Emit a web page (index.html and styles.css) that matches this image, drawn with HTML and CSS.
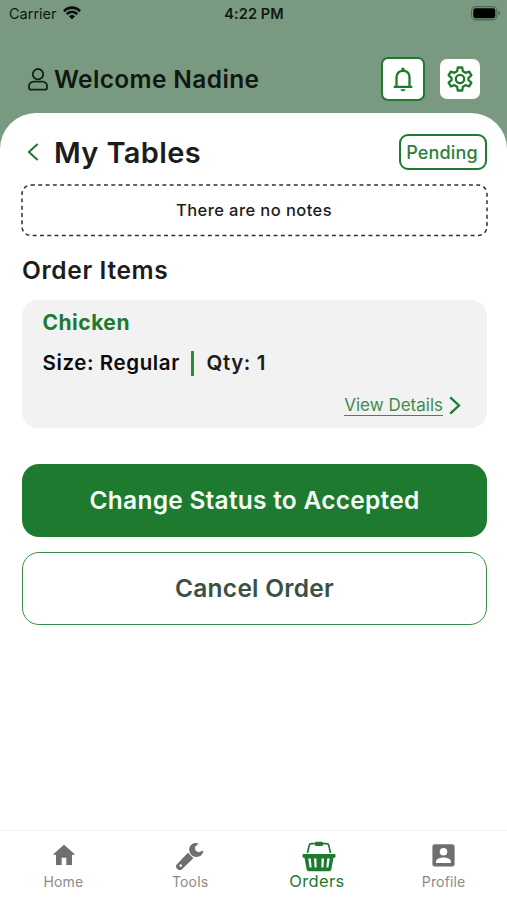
FILE: index.html
```html
<!DOCTYPE html>
<html lang="en">
<head>
<meta charset="utf-8">
<meta name="viewport" content="width=device-width, initial-scale=1">
<title>My Tables</title>
<link rel="stylesheet" href="styles.css">
</head>
<body>
<div class="app">
  <div class="status-bar">
    <div class="carrier">
      <span class="carrier-name">Carrier</span>
      <svg class="wifi" width="18" height="14" viewBox="0 0 18 14">
        <path d="M0 4.300C5-1.100 13-1.100 18 4.300L16.200 6.200C12.200 2 5.800 2 1.800 6.200Z"/>
        <path d="M2.900 7.300C6.300 3.700 11.700 3.700 15.100 7.300L13.300 9.200C10.900 6.700 7.100 6.700 4.700 9.200Z"/>
        <path d="M5.900 10.300C7.600 8.600 10.400 8.600 12.100 10.300L9 13.600Z"/>
      </svg>
    </div>
    <span class="clock">4:22 PM</span>
    <svg class="battery" width="30" height="15" viewBox="0 0 30 15">
      <rect x=".6" y=".6" width="25.300" height="13.300" rx="4" fill="none" stroke="#4b6650" stroke-width="1.100"/>
      <rect x="2.300" y="2.300" width="22" height="9.900" rx="2.300"/>
      <path d="M27.300 5v4.500q1.800-.6 1.800-2.250T27.300 5Z" fill="#4b6650"/>
    </svg>
  </div>

  <header class="welcome">
    <svg class="user" width="20" height="23" viewBox="0 0 20 23">
      <circle cx="10" cy="6.200" r="5.200"/>
      <path d="M5.600 13.600h8.800a4.600 4.600 0 0 1 4.600 4.600v1.600a1.800 1.800 0 0 1-1.800 1.800H2.800A1.800 1.800 0 0 1 1 19.800v-1.600a4.600 4.600 0 0 1 4.600-4.600Z"/>
    </svg>
    <h1 class="greeting">Welcome Nadine</h1>
    <button class="icon-button bell-button" aria-label="Notifications">
      <svg width="20" height="25" viewBox="0 0 20 25">
        <path class="line" d="M3.500 19.600V10.500C3.500 6.300 6 3.800 10 3.800s6.500 2.500 6.500 6.700v9.100M.7 19.800h18.600"/>
        <path class="fill" d="M8.300 4V2.200a1.700 1.700 0 0 1 3.400 0V4ZM7.500 22.300h5a2.500 2 0 0 1-5 0Z"/>
      </svg>
    </button>
    <button class="icon-button gear-button" aria-label="Settings">
      <svg width="26" height="26" viewBox="0 0 26 26">
        <path class="line" d="M10.800 1.500h4.400l.7 3.700 2.700 1.600 3.600-1.200 2.200 3.800-2.900 2.500v2.200l2.900 2.500-2.200 3.800-3.600-1.200-2.700 1.600-.7 3.700h-4.400l-.7-3.700-2.700-1.600-3.600 1.200-2.200-3.800 2.900-2.500v-2.200L1.600 9.400l2.200-3.800 3.600 1.200 2.700-1.600Z"/>
        <circle class="line" cx="13" cy="13" r="4.200"/>
      </svg>
    </button>
  </header>

  <main class="sheet">
    <div class="title-row">
      <svg class="back" width="12" height="18" viewBox="0 0 12 18"><path d="M10.600 1 2 9l8.600 8"/></svg>
      <h2 class="title">My Tables</h2>
      <span class="badge">Pending</span>
    </div>

    <div class="notes">
      <svg class="notes-outline" width="467" height="53" viewBox="0 0 467 53">
        <rect x="1" y="1" width="465" height="50.500" rx="9"/>
      </svg>
      <span class="notes-text">There are no notes</span>
    </div>

    <h3 class="section-title">Order Items</h3>

    <section class="item">
      <div class="item-name">Chicken</div>
      <div class="item-meta">
        <span class="size">Size: Regular</span>
        <span class="divider"></span>
        <span class="qty">Qty: 1</span>
      </div>
      <div class="details">
        <a class="details-link">View Details</a>
        <svg width="12" height="19" viewBox="0 0 12 19"><path d="m1.200 1.300 8.800 8.200-8.800 8.200"/></svg>
      </div>
    </section>

    <button class="action primary"><span>Change Status to Accepted</span></button>
    <button class="action secondary"><span>Cancel Order</span></button>
  </main>

  <nav class="tabs">
    <div class="tab">
      <svg class="house" width="24" height="22" viewBox="0 0 24 22"><path d="M12 .7 23.300 10.800H20V21h-5.700v-7.200H9.700V21H4V10.800H.7Z"/></svg>
      <span class="tab-label home">Home</span>
    </div>
    <div class="tab">
      <svg class="wrench" width="28" height="28" viewBox="0 0 28 28">
        <path d="M27.200 8.600 22.800 10.200 19.600 8.700 18.800 5.200 22.600 1.500C18.500-.3 13.400 2.300 13.200 7.200 13.100 11.600 16.400 15 20.400 14.900 24.300 14.800 27.400 12.100 27.200 8.600Z"/>
        <path fill-rule="evenodd" d="m11.900 10.700 5.500 5.500L6.200 26.900a3.300 3.300 0 0 1-5-4.900ZM4.700 22.300a1.300 1.300 0 1 0 0 2.600 1.300 1.300 0 0 0 0-2.600Z"/>
      </svg>
      <span class="tab-label tools">Tools</span>
    </div>
    <div class="tab active">
      <svg class="basket" width="34" height="31" viewBox="0 0 34 31">
        <path d="M5.500 12 7.200 4.400Q7.600 2.700 9.400 2.700h15.200q1.800 0 2.200 1.700L28.500 12" fill="none" stroke="currentColor" stroke-width="1.700"/>
        <rect x="13" y=".7" width="8" height="4.300" rx="1.200"/>
        <path fill-rule="evenodd" d="M1.500 13h31q1 0 1 1v1.700q0 1-1 1h-1L29.300 28.500q-.3 1.700-2 1.700H6.700q-1.700 0-2-1.700L2.500 16.700h-1q-1 0-1-1V14q0-1 1-1ZM6.300 17.500l1.300 9h2l-.8-9ZM12 17.500l.6 9h2l-.2-9ZM19.600 17.500l-.2 9h2l.6-9ZM25.200 17.500l-.8 9h2l1.300-9Z"/>
      </svg>
      <span class="tab-label orders">Orders</span>
    </div>
    <div class="tab">
      <svg width="23" height="23" viewBox="0 0 23 23">
        <rect x=".4" y=".3" width="22.200" height="22.200" rx="2.500"/>
        <circle cx="11.500" cy="7.700" r="3.800" fill="#fff"/>
        <path d="M4 19v-1.300c0-2.700 4.600-4.100 7.500-4.100s7.500 1.400 7.500 4.100V19Z" fill="#fff"/>
      </svg>
      <span class="tab-label profile">Profile</span>
    </div>
  </nav>
</div>
</body>
</html>
```

FILE: styles.css
```css
* { box-sizing: border-box; }

body {
  margin: 0;
  font-family: Inter, "Liberation Sans", sans-serif;
  color: #1c1c1e;
}

h1, h2, h3 { margin: 0; font-weight: 600; }

button { font-family: inherit; padding: 0; border: 0; }

svg { display: block; flex: none; }

span, h1, h2, h3, a { white-space: nowrap; }

.app {
  width: 507px;
  height: 900px;
  display: flex;
  flex-direction: column;
  background: linear-gradient(#799a80 0, #799a80 160px, #fff 160px);
  overflow: hidden;
}

.status-bar {
  height: 28px;
  flex: none;
  display: grid;
  grid-template-columns: 1fr auto 1fr;
  align-items: center;
  padding: 0 8px 2px 9px;
  color: #101811;
}

.carrier { display: flex; align-items: center; gap: 6px; }
.carrier-name { font-size: 14.500px; }
.wifi { fill: #0a0f0b; margin-top: -1px; }
.clock { font-size: 14.500px; font-weight: 600; letter-spacing: .1px; }
.battery { justify-self: end; margin-right: -2px; }

.welcome {
  height: 85px;
  flex: none;
  display: flex;
  align-items: center;
  padding: 0 27px 0 28px;
}

.user { fill: none; stroke: #142016; stroke-width: 1.800; margin-top: 17px; }
.greeting { font-size: 24.500px; line-height: 30px; letter-spacing: .35px; margin: 16px auto 0 6px; color: #101811; }

.icon-button {
  display: grid;
  place-items: center;
  background: #fff;
  color: #1d7a2f;
  flex: none;
}

.icon-button .line { fill: none; stroke: currentColor; stroke-width: 2.300; stroke-linejoin: round; }
.icon-button .fill { fill: currentColor; }
.bell-button { width: 44px; height: 44px; border: 2px solid #1d7a2f; border-radius: 7px; margin: 17px 15px 0 0; }
.gear-button { width: 40px; height: 40px; border-radius: 7px; margin-top: 17px; }

.sheet {
  flex: 1;
  background: #fff;
  border-radius: 36px 36px 0 0;
  padding: 21px 20px 0 21px;
}

.title-row { display: flex; align-items: center; height: 36px; padding-left: 6px; }
.back { fill: none; stroke: #1d7a2f; stroke-width: 2; }
.title { font-size: 29px; line-height: 36px; letter-spacing: .35px; margin: 2px auto 0 15px; }

.badge {
  width: 88px;
  height: 36px;
  display: grid;
  place-items: center;
  border: 2px solid #1d7a2f;
  border-radius: 9px;
  color: #2b8139;
  font-size: 18px;
  font-weight: 500;
  letter-spacing: .15px;
  padding: 0 2px 0 0;
}

.notes {
  position: relative;
  display: grid;
  place-items: center;
  height: 53px;
  margin-top: 14px;
}

.notes-outline { position: absolute; inset: 0; }
.notes-outline rect { fill: none; stroke: #303030; stroke-width: 1.500; stroke-dasharray: 3.900 3.400; }
.notes-text { font-size: 16.500px; font-weight: 500; letter-spacing: .43px; margin-top: -2px; }

.section-title { font-size: 24.500px; line-height: 30px; letter-spacing: .65px; margin: 18px 0 0 1px; }

.item {
  height: 128px;
  margin: 15px 0 0 1px;
  background: #f2f2f2;
  border-radius: 16px;
  padding: 10px 25px 0 20.500px;
}

.item-name { font-size: 21px; font-weight: 700; line-height: 26px; letter-spacing: .5px; color: #1d7a2f; }
.item-meta { display: flex; align-items: center; height: 26px; margin-top: 14px; font-size: 20.500px; font-weight: 600; letter-spacing: .6px; }
.size, .qty { margin-top: -1px; }
.size { color: #0a0a0c; }
.divider { width: 3px; height: 25px; background: #2b8a3e; margin: 0 12px 0 11.500px; }
.details { display: flex; align-items: center; justify-content: flex-end; gap: 6px; margin-top: 20px; height: 20px; }
.details-link { font-size: 17px; line-height: 19px; color: #3f8b4b; border-bottom: 1px solid #3f8b4b; }
.details svg { fill: none; stroke: #1d7a2f; stroke-width: 2.300; margin: -2px 1px 0 0; }

.action {
  display: grid;
  place-items: center;
  width: 465px;
  height: 73px;
  margin-left: 1px;
  border-radius: 17px;
  font-size: 24.500px;
  font-weight: 600;
  letter-spacing: .25px;
}

.primary { margin-top: 36px; background: #1d7a2f; color: #f5fff5; }
.secondary { margin-top: 15px; background: #fff; border: 1.500px solid #3c8c4d; color: #3b5143; }
.action span { margin-top: -1px; }

.tabs {
  height: 70px;
  flex: none;
  display: grid;
  grid-template-columns: repeat(4, 1fr);
  background: #fff;
  border-top: 1px solid #f1f1f1;
  color: #6f6f6f;
}

.tab { display: flex; flex-direction: column; align-items: center; padding-top: 13px; }
.tab svg { fill: currentColor; }
.tab-label { font-size: 14px; line-height: 18px; margin-top: auto; margin-bottom: 10px; color: #8b8b8b; letter-spacing: .15px; }
.tab .house { margin-left: 1px; }
.tab .wrench { margin-top: -2px; }
.tab.active { color: #1d7a2f; }
.tab .basket { margin: -3px 0 0 5px; }
.tab .orders { font-size: 16.500px; letter-spacing: .35px; color: #1d7a2f; margin-bottom: 11px; }
```
